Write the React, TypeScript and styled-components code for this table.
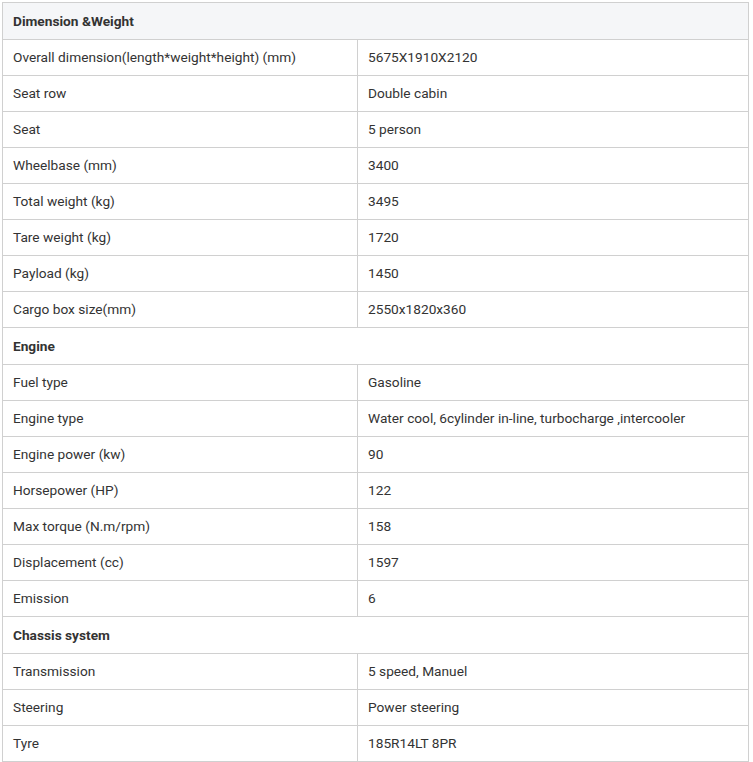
import React from "react";
import styled, { createGlobalStyle } from "styled-components";

const Global = createGlobalStyle`
  html, body { margin: 0; padding: 0; background: #fff; }
  body { font-family: Roboto, "Liberation Sans", Arial, sans-serif; }
`;

const Page = styled.div`
  padding: 2px 0 0 2px;
`;

const Table = styled.table`
  width: 747px;
  border-collapse: collapse;
  table-layout: fixed;
  font-size: 13.7px;
  color: #333;
`;

const Row = styled.tr<{ $section?: boolean; $shaded?: boolean }>`
  height: ${(p) => (p.$section ? 37 : 36)}px;
  background: ${(p) => (p.$shaded ? "#f5f6f8" : "#fff")};
`;

const Cell = styled.td<{ $bold?: boolean }>`
  border: 1px solid #d0d0d0;
  padding: 0 10px 1px;
  vertical-align: middle;
  font-weight: ${(p) => (p.$bold ? 700 : 400)};
  white-space: nowrap;
`;

type Item = { section: string } | { k: string; v: string };

const data: Item[] = [
  { section: "Dimension &Weight" },
  { k: "Overall dimension(length*weight*height) (mm)", v: "5675X1910X2120" },
  { k: "Seat row", v: "Double cabin" },
  { k: "Seat", v: "5 person" },
  { k: "Wheelbase (mm)", v: "3400" },
  { k: "Total weight (kg)", v: "3495" },
  { k: "Tare weight (kg)", v: "1720" },
  { k: "Payload (kg)", v: "1450" },
  { k: "Cargo box size(mm)", v: "2550x1820x360" },
  { section: "Engine" },
  { k: "Fuel type", v: "Gasoline" },
  { k: "Engine type", v: "Water cool, 6cylinder in-line, turbocharge ,intercooler" },
  { k: "Engine power (kw)", v: "90" },
  { k: "Horsepower (HP)", v: "122" },
  { k: "Max torque (N.m/rpm)", v: "158" },
  { k: "Displacement (cc)", v: "1597" },
  { k: "Emission", v: "6" },
  { section: "Chassis system" },
  { k: "Transmission", v: "5 speed, Manuel" },
  { k: "Steering", v: "Power steering" },
  { k: "Tyre", v: "185R14LT 8PR" },
];

export default function App() {
  return (
    <>
      <Global />
      <Page>
        <Table>
          <colgroup>
            <col style={{ width: 355 }} />
            <col />
          </colgroup>
          <tbody>
            {data.map((d, i) =>
              "section" in d ? (
                <Row key={i} $section $shaded={i === 0}>
                  <Cell colSpan={2} $bold>
                    {d.section}
                  </Cell>
                </Row>
              ) : (
                <Row key={i}>
                  <Cell>{d.k}</Cell>
                  <Cell>{d.v}</Cell>
                </Row>
              )
            )}
          </tbody>
        </Table>
      </Page>
    </>
  );
}
